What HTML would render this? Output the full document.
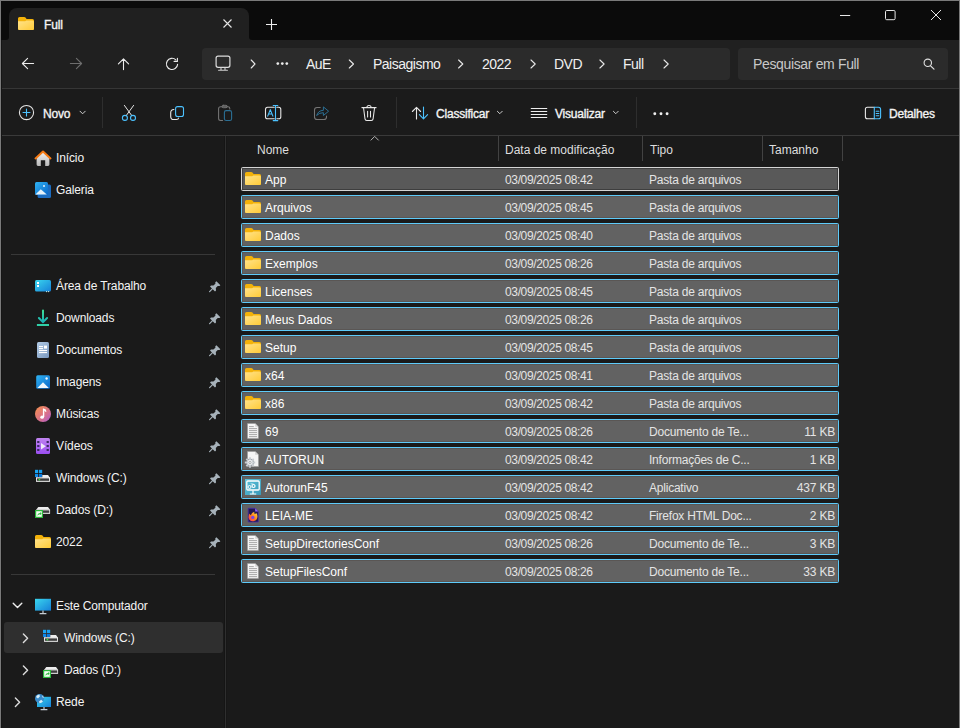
<!DOCTYPE html>
<html><head><meta charset="utf-8">
<style>
*{margin:0;padding:0;box-sizing:border-box}
html,body{width:960px;height:728px;overflow:hidden;background:#1a1a1a;font-family:"Liberation Sans",sans-serif;color:#fff}
.a{position:absolute}
.t{position:absolute;white-space:nowrap;font-size:12px;line-height:14px}
.ov{position:absolute;left:0;top:0;overflow:visible}
.box{position:absolute;background:#2b2b2b;border-radius:4px}
.bc{font-size:14px;line-height:16px;top:56px;color:#f0f0f0;letter-spacing:-0.5px}
.tb{font-size:12px;font-weight:400;top:107px;color:#f4f4f4;letter-spacing:-0.2px;-webkit-text-stroke:0.35px #f4f4f4}
.hd{top:143px;color:#dedede}
.vs{position:absolute;top:136px;width:1px;height:25px;background:#424242}
.row{position:absolute;left:241px;width:598px;height:24px;background:#626262;border:1px solid #5ecbfa;border-radius:1.5px;box-shadow:inset 0 0 0 1px #5a5654}
.row.first{border-color:#d4d4d4;background:#595959;box-shadow:inset 0 0 0 1px #3e3e3e}
.row .n{left:23px;top:5px}
.row .d{left:263px;top:5px;color:#e4e4e4;letter-spacing:-0.36px}
.row .k{left:407px;top:5px;color:#e4e4e4;letter-spacing:-0.22px}
.row .s{right:3px;top:5px;color:#e4e4e4;text-align:right;letter-spacing:-0.2px}
.nv{color:#f4f4f4;letter-spacing:-0.12px}

</style></head><body>
<div class="a" style="left:0;top:0;width:960px;height:40px;background:#0b0b0b"></div>
<div class="a" style="left:0;top:40px;width:960px;height:48px;background:#202020"></div>
<div class="a" style="left:9px;top:8px;width:240px;height:33px;background:#202020;border-radius:8px 8px 0 0"></div>
<div class="a" style="left:1px;top:30px;width:8px;height:10px;background:#202020"></div>
<div class="a" style="left:1px;top:30px;width:8px;height:10px;background:#0b0b0b;border-bottom-right-radius:3px"></div>
<div class="a" style="left:249px;top:30px;width:8px;height:10px;background:#202020"></div>
<div class="a" style="left:249px;top:30px;width:8px;height:10px;background:#0b0b0b;border-bottom-left-radius:3px"></div>
<div class="t" style="left:44px;top:18px;font-weight:400;font-size:12px;letter-spacing:-0.1px;-webkit-text-stroke:0.35px #f4f4f4;color:#f4f4f4">Full</div>
<div class="a" style="left:0;top:88px;width:960px;height:1px;background:#363636"></div>
<div class="a" style="left:0;top:89px;width:960px;height:46px;background:#1b1b1b"></div>
<div class="a" style="left:0;top:135px;width:960px;height:1px;background:#3a3a3a"></div>
<div class="box" style="left:202px;top:48px;width:528px;height:32px"></div>
<div class="box" style="left:738px;top:48px;width:210px;height:32px"></div>
<div class="t bc" style="left:306px">AuE</div>
<div class="t bc" style="left:373px">Paisagismo</div>
<div class="t bc" style="left:482px">2022</div>
<div class="t bc" style="left:554px">DVD</div>
<div class="t bc" style="left:623px">Full</div>
<div class="t bc" style="left:753px;color:#c8c8c8;letter-spacing:-0.35px">Pesquisar em Full</div>
<div class="a" style="left:102px;top:97px;width:1px;height:31px;background:#2e2e2e"></div>
<div class="a" style="left:396px;top:97px;width:1px;height:31px;background:#2e2e2e"></div>
<div class="a" style="left:636px;top:97px;width:1px;height:31px;background:#2e2e2e"></div>
<div class="t tb" style="left:43px">Novo</div>
<div class="t tb" style="left:436px">Classificar</div>
<div class="t tb" style="left:555px">Visualizar</div>
<div class="t tb" style="left:889px">Detalhes</div>
<div class="a" style="left:225px;top:136px;width:1px;height:592px;background:#2f2f2f;box-shadow:-1px 0 0 #151515,1px 0 0 #171717"></div>
<div class="a" style="left:11px;top:254px;width:204px;height:1px;background:#383838"></div>
<div class="a" style="left:11px;top:574px;width:204px;height:1px;background:#383838"></div>
<div class="a" style="left:4px;top:622px;width:219px;height:31px;background:#2f2f2f;border-radius:3px"></div>
<div class="t hd" style="left:257px">Nome</div>
<div class="t hd" style="left:505px">Data de modificação</div>
<div class="t hd" style="left:650px">Tipo</div>
<div class="t hd" style="left:769px">Tamanho</div>
<div class="vs" style="left:498px"></div>
<div class="vs" style="left:642px"></div>
<div class="vs" style="left:762px"></div>
<div class="vs" style="left:842px"></div>
<div class="t nv" style="left:56px;top:151px">Início</div>
<div class="t nv" style="left:56px;top:183px">Galeria</div>
<div class="t nv" style="left:56px;top:279px">Área de Trabalho</div>
<div class="t nv" style="left:56px;top:311px">Downloads</div>
<div class="t nv" style="left:56px;top:343px">Documentos</div>
<div class="t nv" style="left:56px;top:375px">Imagens</div>
<div class="t nv" style="left:56px;top:407px">Músicas</div>
<div class="t nv" style="left:56px;top:439px">Vídeos</div>
<div class="t nv" style="left:56px;top:471px">Windows (C:)</div>
<div class="t nv" style="left:56px;top:503px">Dados (D:)</div>
<div class="t nv" style="left:56px;top:535px">2022</div>
<div class="t nv" style="left:56px;top:599px">Este Computador</div>
<div class="t nv" style="left:64px;top:631px">Windows (C:)</div>
<div class="t nv" style="left:64px;top:663px">Dados (D:)</div>
<div class="t nv" style="left:56px;top:695px">Rede</div>
<div class="row first" style="top:167px"><div class="t n">App</div><div class="t d">03/09/2025 08:42</div><div class="t k">Pasta de arquivos</div></div>
<div class="row" style="top:195px"><div class="t n">Arquivos</div><div class="t d">03/09/2025 08:45</div><div class="t k">Pasta de arquivos</div></div>
<div class="row" style="top:223px"><div class="t n">Dados</div><div class="t d">03/09/2025 08:40</div><div class="t k">Pasta de arquivos</div></div>
<div class="row" style="top:251px"><div class="t n">Exemplos</div><div class="t d">03/09/2025 08:26</div><div class="t k">Pasta de arquivos</div></div>
<div class="row" style="top:279px"><div class="t n">Licenses</div><div class="t d">03/09/2025 08:45</div><div class="t k">Pasta de arquivos</div></div>
<div class="row" style="top:307px"><div class="t n">Meus Dados</div><div class="t d">03/09/2025 08:26</div><div class="t k">Pasta de arquivos</div></div>
<div class="row" style="top:335px"><div class="t n">Setup</div><div class="t d">03/09/2025 08:45</div><div class="t k">Pasta de arquivos</div></div>
<div class="row" style="top:363px"><div class="t n">x64</div><div class="t d">03/09/2025 08:41</div><div class="t k">Pasta de arquivos</div></div>
<div class="row" style="top:391px"><div class="t n">x86</div><div class="t d">03/09/2025 08:42</div><div class="t k">Pasta de arquivos</div></div>
<div class="row" style="top:419px"><div class="t n">69</div><div class="t d">03/09/2025 08:26</div><div class="t k">Documento de Te...</div><div class="t s">11 KB</div></div>
<div class="row" style="top:447px"><div class="t n">AUTORUN</div><div class="t d">03/09/2025 08:42</div><div class="t k">Informações de C...</div><div class="t s">1 KB</div></div>
<div class="row" style="top:475px"><div class="t n">AutorunF45</div><div class="t d">03/09/2025 08:42</div><div class="t k">Aplicativo</div><div class="t s">437 KB</div></div>
<div class="row" style="top:503px"><div class="t n">LEIA-ME</div><div class="t d">03/09/2025 08:42</div><div class="t k">Firefox HTML Doc...</div><div class="t s">2 KB</div></div>
<div class="row" style="top:531px"><div class="t n">SetupDirectoriesConf</div><div class="t d">03/09/2025 08:26</div><div class="t k">Documento de Te...</div><div class="t s">3 KB</div></div>
<div class="row" style="top:559px"><div class="t n">SetupFilesConf</div><div class="t d">03/09/2025 08:26</div><div class="t k">Documento de Te...</div><div class="t s">33 KB</div></div>
<svg class="ov" width="960" height="728" viewBox="0 0 960 728">
<defs>
<linearGradient id="gfold" x1="0" y1="0" x2="1" y2="1"><stop offset="0" stop-color="#ffe38c"/><stop offset="1" stop-color="#ffcb38"/></linearGradient>
<linearGradient id="gblue" x1="0" y1="0" x2="1" y2="1"><stop offset="0" stop-color="#2fb4f4"/><stop offset="1" stop-color="#0a66c8"/></linearGradient>
<linearGradient id="gcyan" x1="0" y1="0" x2="1" y2="1"><stop offset="0" stop-color="#3ad6ee"/><stop offset="1" stop-color="#1680d8"/></linearGradient>
<linearGradient id="gteal" x1="0" y1="0" x2="0" y2="1"><stop offset="0" stop-color="#3ee09a"/><stop offset="1" stop-color="#18b0b8"/></linearGradient>
<linearGradient id="gdoc" x1="0" y1="0" x2="1" y2="1"><stop offset="0" stop-color="#b4cce6"/><stop offset="1" stop-color="#7898c0"/></linearGradient>
<linearGradient id="gmus" x1="0" y1="0" x2="1" y2="1"><stop offset="0" stop-color="#f7924a"/><stop offset=".6" stop-color="#d8708c"/><stop offset="1" stop-color="#a85ad8"/></linearGradient>
<linearGradient id="gvid" x1="0" y1="0" x2="0" y2="1"><stop offset="0" stop-color="#c084f0"/><stop offset="1" stop-color="#9a4ef0"/></linearGradient>
<linearGradient id="gdrv" x1="0" y1="0" x2="0" y2="1"><stop offset="0" stop-color="#f4f4f4"/><stop offset="1" stop-color="#c8c8c8"/></linearGradient>
<linearGradient id="gapp" x1="0" y1="0" x2="1" y2="1"><stop offset="0" stop-color="#5cc4dc"/><stop offset="1" stop-color="#3a98b8"/></linearGradient>
<radialGradient id="gff" cx=".6" cy=".35" r=".7"><stop offset="0" stop-color="#ffe63a"/><stop offset=".55" stop-color="#ff8a1a"/><stop offset="1" stop-color="#f02a5a"/></radialGradient>
<g id="fold16">
<path d="M1.5 0H6.2Q7 0 7.5 .6L8.6 2H14.5Q16 2 16 3.5V11.5Q16 13 14.5 13H1.5Q0 13 0 11.5V1.5Q0 0 1.5 0Z" fill="#f3b20a"/>
<path d="M0 4.2H7.2L8.3 3.5H14.5Q16 3.5 16 5V11.5Q16 13 14.5 13H1.5Q0 13 0 11.5Z" fill="url(#gfold)"/>
</g>
<g id="txtdoc">
<path d="M.3 .3H8L11.2 3.5V15.2H.3Z" fill="#f6f6f6" stroke="#9a9a9a" stroke-width=".6"/>
<path d="M8 .3V3.5H11.2Z" fill="#d4d4d4"/>
<g fill="#a8a8a8"><rect x="1.8" y="2.9" width="4.8" height="1"/><rect x="1.8" y="4.9" width="8" height="1"/><rect x="1.8" y="6.9" width="8" height="1"/><rect x="1.8" y="8.9" width="8" height="1"/><rect x="1.8" y="10.9" width="8" height="1"/><rect x="1.8" y="12.9" width="8" height="1"/></g>
</g>
<g id="i-folder"><use href="#fold16" x="245" y="172"/></g>
<g id="i-txt"><use href="#txtdoc" x="247.2" y="423.2" transform="translate(0,-252)"/></g>
<g id="i-inf" transform="translate(0,-252)">
<path d="M247.5 423.5H255.2L258.5 426.8V438.5H247.5Z" fill="#f4f4f4" stroke="#9a9a9a" stroke-width=".6"/>
<path d="M255.2 423.5V426.8H258.5Z" fill="#d0d0d0"/>
<g transform="translate(250,434.5)"><circle r="3.6" fill="#d8dde2" stroke="#6a6f74" stroke-width=".7"/><path d="M0-5.2V5.2M-5.2 0H5.2M-3.7-3.7L3.7 3.7M3.7-3.7L-3.7 3.7" stroke="#c8cdd2" stroke-width="1.8"/><circle r="2.4" fill="#eef0f2"/><circle r="1.1" fill="#fff" stroke="#7a7f84" stroke-width=".6"/></g>
</g>
<g id="i-exe" transform="translate(0,-308)">
<rect x="245" y="479" width="16" height="16" fill="url(#gapp)"/>
<rect x="246.8" y="481" width="12.4" height="9" rx="1" fill="none" stroke="#fff" stroke-width="1.3"/>
<path d="M253 490.5V493.5M249.8 494H256.2" stroke="#fff" stroke-width="1.2"/>
<circle cx="249.5" cy="487" r="1.5" fill="none" stroke="#fff" stroke-width="1"/>
<circle cx="253.5" cy="486" r="1.5" fill="none" stroke="#fff" stroke-width="1.2"/>
<path d="M251 483.3L252 484.3L253 483.3" stroke="#fff" stroke-width=".8" fill="none"/>
</g>
<g id="i-ff" transform="translate(0,-336)">
<path d="M248.2 508.3H255.2L258.3 511.4V522H248.2Z" fill="#231850" stroke="#4a30a8" stroke-width=".8"/>
<path d="M255.2 508.3V511.4H258.3Z" fill="#9060f4"/>
<linearGradient id="gff2" x1="0" y1="1" x2="1" y2="0"><stop offset="0" stop-color="#ff2a68"/><stop offset=".45" stop-color="#ff7a1e"/><stop offset="1" stop-color="#ffe23a"/></linearGradient>
<path d="M256.6 513.2Q257.6 515 257.4 517Q257 520.6 253.3 521.3Q249.6 521.6 248.7 518Q248.3 515.6 249.7 513.6Q249.9 515 250.8 515.2Q251.6 512.8 254.4 511.8Q254 513.2 254.8 514Q256 513.4 256.6 513.2Z" fill="url(#gff2)"/>
<circle cx="252.8" cy="517.4" r="1.7" fill="#7b44e6"/>
</g>
<g id="pin1">
<path d="M7.8 .6L11.8 4.6L10.9 5.4L9.1 5.3L7.2 7.4L7.4 9.8L6.4 10.8L1.4 5.8L2.4 4.8L4.8 5L6.8 3.1L6.7 1.6Z" fill="#a7b2ba"/>
<path d="M4.2 7.8L1 11" stroke="#a7b2ba" stroke-width="1.2" stroke-linecap="round"/>
</g>
<g id="i-pin"><use href="#pin1" x="208.6" y="472.6"/></g>
<g id="windrv">
<rect x="35" y="469.8" width="3.2" height="3.2" fill="#1aa6f4"/><rect x="39" y="469.8" width="3.2" height="3.2" fill="#1aa0f0"/>
<rect x="35" y="473.8" width="3.2" height="3.2" fill="#0f88e6"/><rect x="39" y="473.8" width="3.2" height="3.2" fill="#0a78dc"/>
<path d="M42.3 475H48L50 477.8H42.3Z" fill="#ececec"/><path d="M36 477.3H50V481.4Q50 482 49.4 482H36.6Q36 482 36 481.4Z" fill="url(#gdrv)"/>
<rect x="37" y="478.4" width="12" height="2.4" fill="#3c3c3c"/><circle cx="39.4" cy="479.6" r=".9" fill="#3ae83a"/>
</g>
<g id="datdrv">
<path d="M38.3 506.9H48L50.1 509.7H36.2Z" fill="#ececec"/><path d="M36.2 509.4H50.1V513.4Q50.1 514 49.5 514H36.8Q36.2 514 36.2 513.4Z" fill="url(#gdrv)"/>
<rect x="42" y="510.4" width="7.2" height="2.4" fill="#3c3c3c"/>
<rect x="35" y="510" width="8" height="8" fill="#2cb83c"/><rect x="36.2" y="511.2" width="5.6" height="5.6" fill="#f4fff4"/>
<path d="M37.2 515.8Q37.6 513.2 40 513V512L41.6 513.6L40 515.2V514.2Q38.4 514.4 37.2 515.8Z" fill="#2cb83c"/>
</g>
</defs>
<!-- title bar -->
<use href="#fold16" x="18" y="17"/>
<path d="M223.5 19.5L231.5 27.5M231.5 19.5L223.5 27.5" stroke="#e6e6e6" stroke-width="1.1"/>
<path d="M266 24.5H277M271.5 19V30" stroke="#f0f0f0" stroke-width="1.1"/>
<path d="M840 15.5H850.2" stroke="#e8e8e8" stroke-width="1"/>
<rect x="885.5" y="10.5" width="9.6" height="9.2" rx="1.2" fill="none" stroke="#e8e8e8" stroke-width="1"/>
<path d="M931 10L941 20M941 10L931 20" stroke="#e8e8e8" stroke-width="1"/>
<!-- nav -->
<g fill="none" stroke-width="1.1" stroke-linecap="round" stroke-linejoin="round">
<path d="M33.6 63.5H22.4M27.6 58.3L22.4 63.5L27.6 68.7" stroke="#ececec"/>
<path d="M70.4 63.5H81.6M76.4 58.3L81.6 63.5L76.4 68.7" stroke="#6e6e6e"/>
<path d="M123.5 69.6V58.8M118.4 63.9L123.5 58.8L128.6 63.9" stroke="#ececec"/>
<path d="M177.6 64.4A5.6 5.6 0 1 1 175.8 59.8" stroke="#ececec"/>
<path d="M177.4 58.2V61.4H174.1" stroke="#ececec"/>
<!-- breadcrumb -->
<rect x="216.1" y="56.1" width="13.8" height="11.2" rx="2" stroke="#dcdcdc" stroke-width="1.2"/>
<path d="M221 67.8V69.8M225 67.8V69.8M218.6 70.3H227.4" stroke="#d0d0d0" stroke-width="1.1"/>
<g stroke="#e8e8e8" stroke-width="1.1"><path d="M251.2 60L255 64L251.2 68"/><path d="M349.3 60L353.5 64L349.3 68"/><path d="M458.6 60L462.8 64L458.6 68"/><path d="M531 60L535.2 64L531 68"/><path d="M599.9 60L604.1 64L599.9 68"/><path d="M664 60L668.2 64L664 68"/></g>
<g fill="#ececec" stroke="none"><circle cx="277.8" cy="63.6" r="1.35"/><circle cx="282.3" cy="63.6" r="1.35"/><circle cx="286.8" cy="63.6" r="1.35"/></g>
<circle cx="927.8" cy="62.8" r="3.7" stroke="#e0e0e0" stroke-width="1.1"/>
<path d="M930.6 65.8L934 69.2" stroke="#e0e0e0" stroke-width="1.2"/>
<!-- toolbar -->
<circle cx="26.5" cy="112.5" r="7.1" stroke="#e6e6e6" stroke-width="1.05"/>
<path d="M23 112.5H30M26.5 109V116" stroke="#4cc2ff" stroke-width="1.1"/>
<path d="M80 111.2L82.6 113.8L85.2 111.2" stroke="#cfcfcf" stroke-width="1"/>
<path d="M124.4 105.4L131.8 115.6M133.6 105.4L126.2 115.6" stroke="#e6e6e6" stroke-width="1"/>
<circle cx="124.9" cy="117.9" r="2.5" stroke="#4cc2ff" stroke-width="1.1"/>
<circle cx="133" cy="117.9" r="2.5" stroke="#4cc2ff" stroke-width="1.1"/>
<rect x="175.6" y="106.6" width="7.9" height="9.9" rx="2" stroke="#4cc2ff" stroke-width="1.1"/>
<path d="M173.9 109.5Q170.7 109.6 170.7 112.7V116.4Q170.7 119.5 173.8 119.5H176.4Q178.4 119.5 178.6 118" stroke="#e6e6e6" stroke-width="1.1"/>
<path d="M222.6 120.5H220.6Q218.6 120.5 218.6 118.5V108.7Q218.6 106.7 220.6 106.7H227.9Q229.8 106.7 229.8 108.6V109" stroke="#767676" stroke-width="1.05"/>
<rect x="222" y="105.3" width="5.2" height="2.4" rx="1.2" stroke="#767676" stroke-width="1"/>
<rect x="224.4" y="110.6" width="7.2" height="9.9" rx="1.8" stroke="#2b6f94" stroke-width="1.1"/>
<path d="M274.3 107.3H267.6Q265.5 107.3 265.5 109.4V116.7Q265.5 118.8 267.6 118.8H274.3M276.8 107.3H278.7Q280.8 107.3 280.8 109.4V116.7Q280.8 118.8 278.7 118.8H276.8" stroke="#e6e6e6" stroke-width="1.1"/>
<path d="M275.5 105.6V120.4M273.2 105.5H277.8M273.2 120.6H277.8M267.7 116.1L270.3 109.6L272.9 116.1M268.6 114H272" stroke="#4cc2ff" stroke-width="1.1"/>
<path d="M320.2 107.5H317.1Q314.5 107.5 314.5 110.1V116.9Q314.5 119.5 317.1 119.5H323.9Q326.5 119.5 326.5 116.9V116" stroke="#767676" stroke-width="1.05"/>
<path d="M316.9 115.1Q318 110.6 323.4 110.3V106.9L328.6 111.2L323.4 115.5V112.7Q319.6 112.6 316.9 115.1Z" stroke="#2b6f94" stroke-width="1"/>
<path d="M361.9 107.6H376.1M366.9 107.4Q366.9 105.4 369 105.4Q371.1 105.4 371.1 107.4M363.6 108.2L365 118.9Q365.2 120.4 366.7 120.4H371.4Q372.9 120.4 373.1 118.9L374.5 108.2M367.6 111.2V117M370.5 111.2V117" stroke="#e8e8e8" stroke-width="1.05"/>
<path d="M416.5 119V107.4M412.4 111.5L416.5 107.4L420.6 111.5" stroke="#e8e8e8" stroke-width="1.1"/>
<path d="M423.5 107V118.8M419.4 114.7L423.5 118.8L427.6 114.7" stroke="#4cc2ff" stroke-width="1.1"/>
<path d="M497.4 111.3L499.8 113.7L502.2 111.3" stroke="#cfcfcf" stroke-width="1"/>
<path d="M531.2 108.5H546.8M531.2 111.5H546.8M531.2 114.5H546.8M531.2 117.5H546.8" stroke="#ececec" stroke-width="1"/>
<path d="M613.4 111.3L615.8 113.7L618.2 111.3" stroke="#cfcfcf" stroke-width="1"/>
<g fill="#f0f0f0" stroke="none"><circle cx="654.8" cy="113.7" r="1.45"/><circle cx="661" cy="113.7" r="1.45"/><circle cx="667.1" cy="113.7" r="1.45"/></g>
<path d="M874.3 107.3H867.4Q865.4 107.3 865.4 109.3V116.8Q865.4 118.8 867.4 118.8H874.3" stroke="#e8e8e8" stroke-width="1.1"/>
<path d="M874.3 107.3H878.5Q880.6 107.3 880.6 109.4V116.7Q880.6 118.8 878.5 118.8H874.3ZM876.2 111.3H878.9M876.2 113.5H878.9M876.2 115.7H878.9" stroke="#4cc2ff" stroke-width="1.1"/>
<path d="M371 140.1L374.7 136.4L378.4 140.1" stroke="#b4b4b4" stroke-width="1"/>
<!-- sidebar chevrons -->
<path d="M13.2 603.3L17.5 607.6L21.8 603.3" stroke="#eeeeee" stroke-width="1.4"/>
<path d="M23.4 634L27.6 638.2L23.4 642.4" stroke="#dddddd" stroke-width="1.4"/>
<path d="M23.4 666L27.6 670.2L23.4 674.4" stroke="#dddddd" stroke-width="1.4"/>
<path d="M15.4 698L19.6 702.2L15.4 706.4" stroke="#dddddd" stroke-width="1.4"/>
</g>
<!-- house -->
<linearGradient id="ghouse" x1="0" y1="0" x2="0" y2="1"><stop offset="0" stop-color="#f0f0f0"/><stop offset="1" stop-color="#b8b8b8"/></linearGradient>
<path d="M36.6 157.8L43 152.2L49.4 157.8V164.6Q49.4 166 48 166H45.2V160.2H40.8V166H38Q36.6 166 36.6 164.6Z" fill="url(#ghouse)"/>
<path d="M35.5 158.4L43 151.5L50.5 158.4" fill="none" stroke="#f57a14" stroke-width="2" stroke-linejoin="round" stroke-linecap="round"/>
<!-- gallery -->
<rect x="37.6" y="184.6" width="13.4" height="13.4" rx="1.5" fill="#1c6cc0"/>
<rect x="35" y="182" width="13" height="13" rx="1.5" fill="url(#gblue)"/>
<path d="M35.4 194.4L40.8 189.2L46.8 194.4Z" fill="#e6f2fb"/>
<circle cx="44" cy="186" r="1" fill="#e6f2fb"/>
<!-- desktop -->
<rect x="35" y="280" width="16" height="11.6" rx="1.5" fill="url(#gcyan)"/>
<rect x="37" y="282" width="2" height="2" fill="#fff"/><rect x="37" y="285" width="2" height="2" fill="#fff"/>
<circle cx="46.6" cy="291.6" r=".6" fill="#dfe"/><circle cx="48.6" cy="291.6" r=".6" fill="#dfe"/>
<!-- downloads -->
<path d="M43 310.4V322M38.9 318L43 322.1L47.1 318" fill="none" stroke="url(#gteal)" stroke-width="2" stroke-linecap="round"/>
<path d="M36.9 325H49" stroke="#30d0a8" stroke-width="2"/>
<!-- documents -->
<rect x="37" y="342" width="12" height="16" rx="1.5" fill="url(#gdoc)"/>
<g fill="#fff"><rect x="39" y="346" width="4" height="1.1"/><rect x="39" y="348" width="4" height="1.1"/><rect x="39" y="350" width="8" height="1.1"/><rect x="39" y="352" width="8" height="1.1"/><rect x="44" y="345.6" width="3" height="3"/></g>
<!-- images -->
<rect x="36.2" y="375.2" width="13.8" height="13.6" rx="1.5" fill="url(#gblue)"/>
<path d="M37.4 388L43 382.2L48.8 388Z" fill="#eef6fc"/>
<circle cx="46.6" cy="378.5" r="1.2" fill="#eef6fc"/>
<!-- music -->
<circle cx="43" cy="414" r="8" fill="url(#gmus)"/>
<path d="M43.6 417V409.3Q45.8 409.8 45.8 411.8" fill="none" stroke="#fff" stroke-width="1.4"/>
<ellipse cx="42.1" cy="417.2" rx="1.8" ry="1.6" fill="#fff"/>
<!-- videos -->
<rect x="36" y="438" width="14" height="16" rx="1.5" fill="url(#gvid)"/>
<g fill="#3a2a60"><rect x="37.2" y="441" width="2.2" height="2"/><rect x="37.2" y="445" width="2.2" height="2"/><rect x="37.2" y="449" width="2.2" height="2"/><rect x="46.6" y="441" width="2.2" height="2"/><rect x="46.6" y="445" width="2.2" height="2"/><rect x="46.6" y="449" width="2.2" height="2"/></g>
<path d="M41 443L45.8 446.2L41 449.4Z" fill="#f0eaf8"/>
<!-- drives -->
<use href="#windrv"/>
<use href="#datdrv"/>
<use href="#fold16" x="35" y="535"/>
<!-- computer -->
<rect x="35" y="598.8" width="16" height="11.8" fill="url(#gcyan)"/>
<path d="M43 610.6V613M39.6 613.6H46.4" stroke="#c4ccd4" stroke-width="1.2"/>
<use href="#windrv" x="8" y="160"/>
<use href="#datdrv" x="8" y="160"/>
<!-- network -->
<rect x="37" y="696.8" width="14" height="10.2" fill="url(#gcyan)"/>
<path d="M44 707V709.2M40.6 709.6H47.4" stroke="#c4ccd4" stroke-width="1.2"/>
<circle cx="39.6" cy="698.6" r="4.6" fill="#3a8ccc"/>
<path d="M36 697Q37 694.8 39.2 694.4L40 696.2L38 698.4Z M39 701.5L41.2 699.8L43 701.5Q41.5 703.2 39.5 703.2Z M42 695.5Q43.5 696.2 44 697.8L42.6 697.4Z" fill="#d8eef8"/>

<use href="#i-folder" x="0" y="0"/>
<use href="#i-folder" x="0" y="28"/>
<use href="#i-folder" x="0" y="56"/>
<use href="#i-folder" x="0" y="84"/>
<use href="#i-folder" x="0" y="112"/>
<use href="#i-folder" x="0" y="140"/>
<use href="#i-folder" x="0" y="168"/>
<use href="#i-folder" x="0" y="196"/>
<use href="#i-folder" x="0" y="224"/>
<use href="#i-txt" x="0" y="252"/>
<use href="#i-inf" x="0" y="280"/>
<use href="#i-exe" x="0" y="308"/>
<use href="#i-ff" x="0" y="336"/>
<use href="#i-txt" x="0" y="364"/>
<use href="#i-txt" x="0" y="392"/>
<use href="#i-pin" x="0" y="-192"/>
<use href="#i-pin" x="0" y="-160"/>
<use href="#i-pin" x="0" y="-128"/>
<use href="#i-pin" x="0" y="-96"/>
<use href="#i-pin" x="0" y="-64"/>
<use href="#i-pin" x="0" y="-32"/>
<use href="#i-pin" x="0" y="0"/>
<use href="#i-pin" x="0" y="32"/>
<use href="#i-pin" x="0" y="64"/>
</svg><div class="a" style="left:1px;top:40px;width:1px;height:688px;background:#151515"></div>
<div class="a" style="left:0;top:0;width:960px;height:1px;background:#7a7a7a"></div>
<div class="a" style="left:0;top:0;width:1px;height:728px;background:#7a7a7a"></div>
<div class="a" style="left:959px;top:0;width:1px;height:728px;background:#7a7a7a"></div>
</body></html>
